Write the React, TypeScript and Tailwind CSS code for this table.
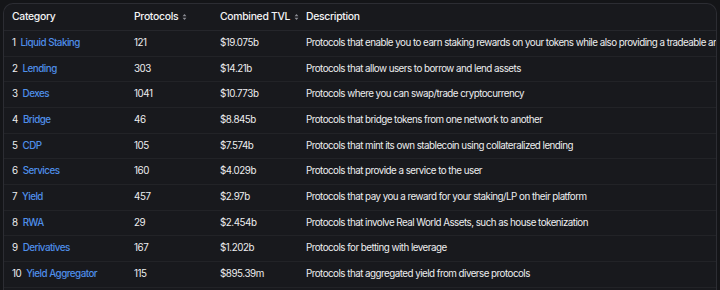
import React from 'react'

const rows = [
  { name: 'Liquid Staking', protocols: '121', tvl: '$19.075b', desc: 'Protocols that enable you to earn staking rewards on your tokens while also providing a tradeable and liquid receipt for your staked position' },
  { name: 'Lending', protocols: '303', tvl: '$14.21b', desc: 'Protocols that allow users to borrow and lend assets' },
  { name: 'Dexes', protocols: '1041', tvl: '$10.773b', desc: 'Protocols where you can swap/trade cryptocurrency' },
  { name: 'Bridge', protocols: '46', tvl: '$8.845b', desc: 'Protocols that bridge tokens from one network to another' },
  { name: 'CDP', protocols: '105', tvl: '$7.574b', desc: 'Protocols that mint its own stablecoin using collateralized lending' },
  { name: 'Services', protocols: '160', tvl: '$4.029b', desc: 'Protocols that provide a service to the user' },
  { name: 'Yield', protocols: '457', tvl: '$2.97b', desc: 'Protocols that pay you a reward for your staking/LP on their platform' },
  { name: 'RWA', protocols: '29', tvl: '$2.454b', desc: 'Protocols that involve Real World Assets, such as house tokenization' },
  { name: 'Derivatives', protocols: '167', tvl: '$1.202b', desc: 'Protocols for betting with leverage' },
  { name: 'Yield Aggregator', protocols: '115', tvl: '$895.39m', desc: 'Protocols that aggregated yield from diverse protocols' },
]

function SortIcon() {
  return (
    <svg width="5" height="8" viewBox="0 0 6 9" className="ml-[4px] shrink-0" fill="#8a8c93">
      <path d="M3 0.8 L5.3 3.6 H0.7 Z" />
      <path d="M3 8.2 L5.3 5.4 H0.7 Z" />
    </svg>
  )
}

export default function App() {
  return (
    <div className="h-[290px] w-[720px] overflow-hidden bg-[#141518] pl-[3px] pt-[3px] font-['Inter',sans-serif] text-[9.8px] tracking-[-0.45px]">
      <div className="h-[300px] w-[714px] overflow-hidden rounded-t-[10px] border-l border-r border-t border-[#2c2d33] bg-[#18191d]">
        {/* Header */}
        <div className="flex h-[27px] items-center whitespace-nowrap border-b border-[#25262b] text-[10.4px] font-medium tracking-[-0.3px] text-[#f4f4f5]">
          <div className="w-[130px] shrink-0 pl-[8px]">Category</div>
          <div className="flex w-[86px] shrink-0 items-center">
            Protocols
            <SortIcon />
          </div>
          <div className="flex w-[86px] shrink-0 items-center">
            Combined TVL
            <SortIcon />
          </div>
          <div>Description</div>
        </div>

        {rows.map((r, i) => (
          <div
            key={r.name}
            className="flex h-[25.67px] items-center whitespace-nowrap border-b border-[#222327] text-[#ededef]"
          >
            <div className="flex w-[130px] shrink-0 pl-[8px]">
              <span className="mr-[5px]">{i + 1}</span>
              <span className="font-medium tracking-[-0.5px] text-[#4f8fea]">{r.name}</span>
            </div>
            <div className="w-[86px] shrink-0">{r.protocols}</div>
            <div className="w-[86px] shrink-0">{r.tvl}</div>
            <div className="shrink-0 tracking-[-0.52px]">{r.desc}</div>
          </div>
        ))}
      </div>
    </div>
  )
}
